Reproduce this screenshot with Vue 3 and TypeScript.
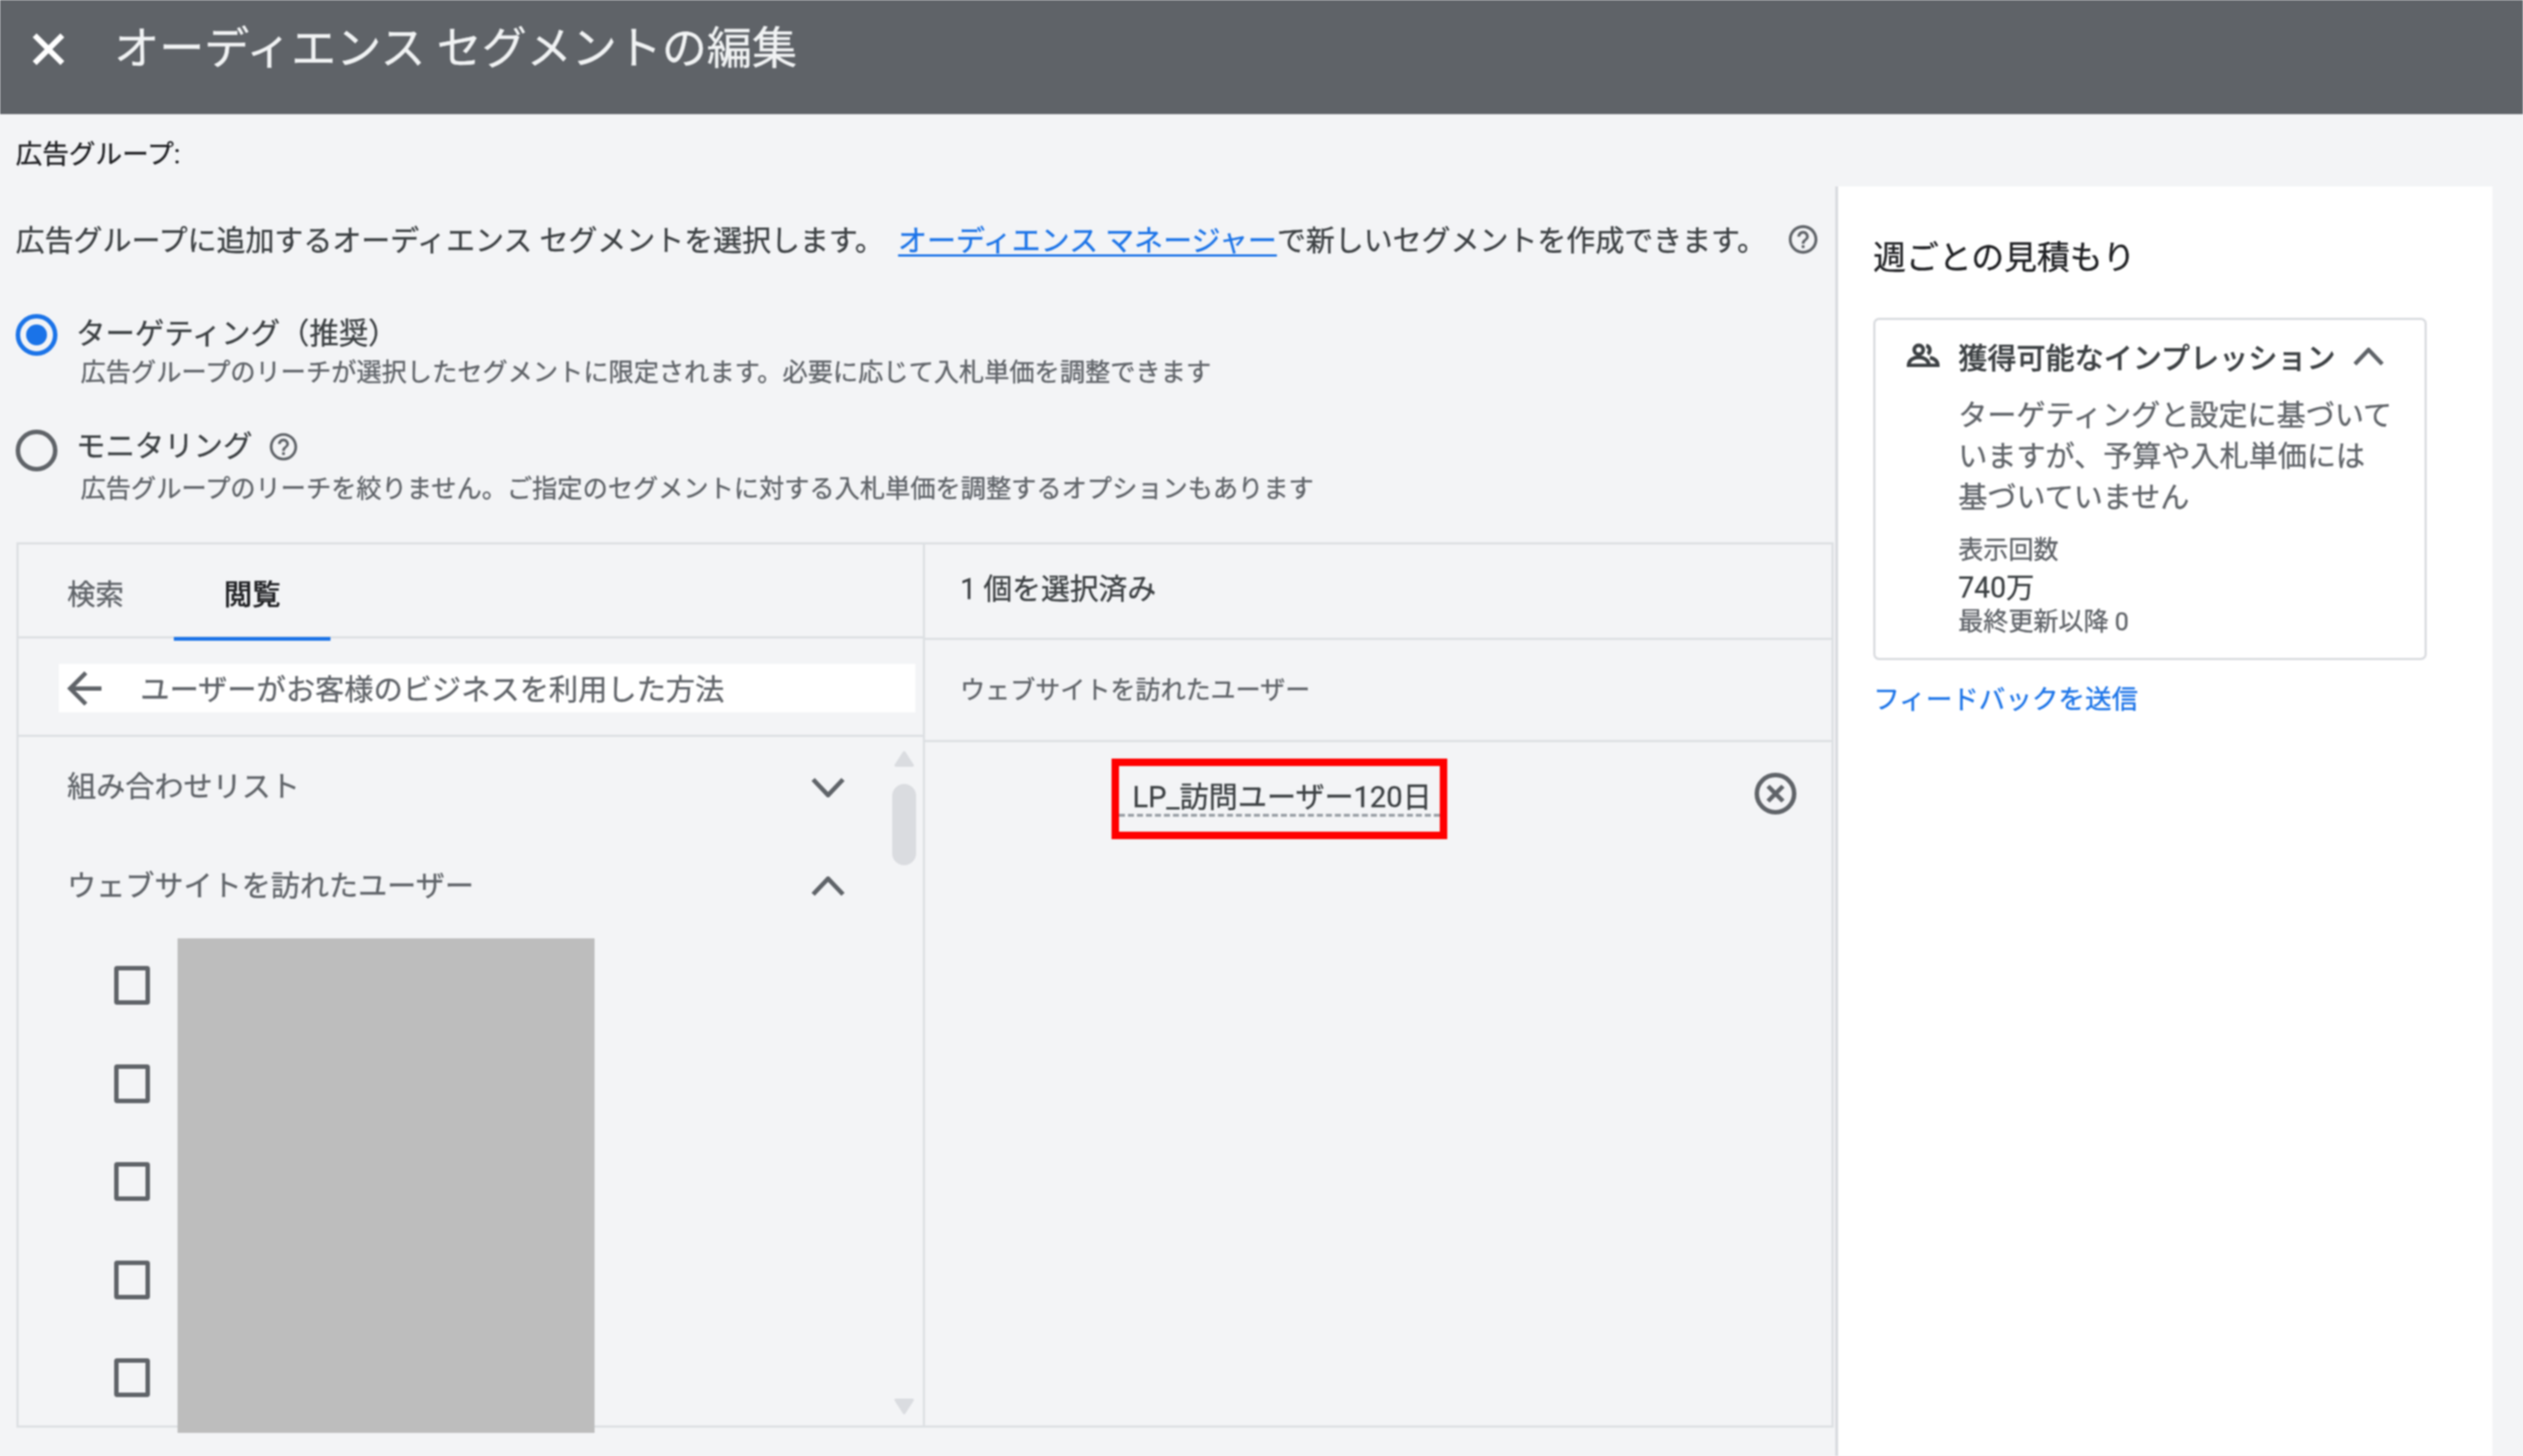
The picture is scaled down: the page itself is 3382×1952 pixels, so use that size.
<script setup lang="ts">
const checks: number[] = [1, 2, 3, 4, 5]
const help =
  'M11 18h2v-2h-2v2zm1-16C6.48 2 2 6.48 2 12s4.48 10 10 10 10-4.48 10-10S17.52 2 12 2zm0 18c-4.41 0-8-3.59-8-8s3.59-8 8-8 8 3.59 8 8-3.59 8-8 8zm0-14c-2.21 0-4 1.79-4 4h2c0-1.1.9-2 2-2s2 .9 2 2c0 2-3 1.75-3 5h2c0-2.25 3-2.5 3-5 0-2.21-1.79-4-4-4z'
</script>

<template>
  <div class="page">
    <header class="topbar">
      <svg class="close" viewBox="5 5 14 14" aria-hidden="true">
        <path d="M19 6.41L17.59 5 12 10.59 6.41 5 5 6.41 10.59 12 5 17.59 6.41 19 12 13.41 17.59 19 19 17.59 13.41 12z" />
      </svg>
      <h1 class="title">オーディエンス セグメントの編集</h1>
    </header>

    <div class="content">
      <main class="main">
        <div class="group-label">広告グループ:</div>
        <p class="intro">
          <span>広告グループに追加するオーディエンス セグメントを選択します。</span>
          <a class="intro-link">オーディエンス マネージャー</a>
          <span>で新しいセグメントを作成できます。</span>
          <svg class="help help-intro" viewBox="0 0 24 24" aria-hidden="true"><path :d="help" /></svg>
        </p>

        <div class="option option-first">
          <span class="radio radio-on"><span class="radio-dot"></span></span>
          <div class="option-text">
            <div class="option-label">ターゲティング（推奨）</div>
            <div class="option-sub">広告グループのリーチが選択したセグメントに限定されます。必要に応じて入札単価を調整できます</div>
          </div>
        </div>
        <div class="option option-second">
          <span class="radio radio-off"></span>
          <div class="option-text">
            <div class="option-label">
              <span>モニタリング</span>
              <svg class="help help-option" viewBox="0 0 24 24" aria-hidden="true"><path :d="help" /></svg>
            </div>
            <div class="option-sub option-sub-second">広告グループのリーチを絞りません。ご指定のセグメントに対する入札単価を調整するオプションもあります</div>
          </div>
        </div>

        <section class="panel">
          <div class="pane-left">
            <div class="tabs">
              <span class="tab">検索</span>
              <span class="tab tab-active">閲覧</span>
            </div>
            <div class="crumb-row">
              <div class="crumb">
                <svg class="arrow" viewBox="4 4 16 16" aria-hidden="true">
                  <path d="M20 11H7.83l5.59-5.59L12 4l-8 8 8 8 1.41-1.41L7.83 13H20v-2z" />
                </svg>
                <span class="crumb-text">ユーザーがお客様のビジネスを利用した方法</span>
              </div>
            </div>
            <div class="list">
              <div class="list-head">
                <span>組み合わせリスト</span>
                <svg class="chev" viewBox="0 0 46 27" aria-hidden="true"><path d="M3 3 L23 24 L43 3" /></svg>
              </div>
              <div class="list-head list-head-second">
                <span>ウェブサイトを訪れたユーザー</span>
                <svg class="chev" viewBox="0 0 46 27" aria-hidden="true"><path d="M3 24 L23 3 L43 24" /></svg>
              </div>
              <div class="checks">
                <span v-for="c in checks" :key="c" class="check"></span>
              </div>
            </div>
            <div class="redact"></div>
            <div class="scrollbar">
              <svg class="scroll-arrow" viewBox="0 0 32 24" aria-hidden="true"><path d="M16 3 L27 20 L5 20 Z" /></svg>
              <span class="scroll-thumb"></span>
              <svg class="scroll-arrow scroll-arrow-down" viewBox="0 0 32 24" aria-hidden="true"><path d="M5 4 L27 4 L16 21 Z" /></svg>
            </div>
          </div>

          <div class="pane-right">
            <div class="selected-head">1 個を選択済み</div>
            <div class="selected-group">ウェブサイトを訪れたユーザー</div>
            <div class="selected-row">
              <div class="selected-box"><span class="selected-name">LP_訪問ユーザー120日</span></div>
              <svg class="remove" viewBox="0 0 56 56" aria-hidden="true">
                <circle cx="28" cy="28" r="25" />
                <path d="M18 18 L38 38 M38 18 L18 38" />
              </svg>
            </div>
          </div>
        </section>
      </main>

      <aside class="aside">
        <h2 class="aside-title">週ごとの見積もり</h2>
        <div class="card">
          <div class="card-head">
            <svg class="people" viewBox="0 0 44 32" aria-hidden="true">
              <circle cx="16" cy="9" r="6" />
              <path d="M2.5 30 C2.5 22 10 19 16 19 S29.5 22 29.5 30 Z" />
              <path d="M26 3.5 A6 6 0 0 1 28 14.5" />
              <path d="M31 19.5 C37 20.5 41.5 24 41.5 30 H31" />
            </svg>
            <span class="card-title">獲得可能なインプレッション</span>
            <svg class="chev chev-card" viewBox="0 0 46 27" aria-hidden="true"><path d="M3 24 L23 3 L43 24" /></svg>
          </div>
          <div class="card-body">
            <p class="card-text">ターゲティングと設定に基づいて<br />いますが、予算や入札単価には<br />基づいていません</p>
            <div class="metric-label">表示回数</div>
            <div class="metric-value">740万</div>
            <div class="metric-note">最終更新以降 0</div>
          </div>
        </div>
        <a class="feedback">フィードバックを送信</a>
      </aside>
    </div>
  </div>
</template>

<style>
html,
body {
  margin: 0;
  background: #f3f4f6;
}
</style>

<style scoped>
.page {
  width: 3382px;
  height: 1952px;
  display: flex;
  flex-direction: column;
  overflow: hidden;
  background: #f3f4f6;
  color: #3c4043;
  font-family: Roboto, "Noto Sans CJK JP", sans-serif;
  font-size: 38.8px;
  -webkit-text-stroke: 0.4px currentColor;
  filter: blur(1px);
}
.topbar {
  height: 153px;
  flex: none;
  box-sizing: border-box;
  padding: 0 0 22px 45px;
  display: flex;
  align-items: center;
  gap: 68px;
  background: #5f6368;
  color: #f1f3f4;
}
.close {
  width: 40px;
  height: 40px;
  fill: #fff;
  stroke: #fff;
  stroke-width: 0.6px;
  overflow: visible;
}
.title {
  margin: 0;
  font-size: 60.4px;
  font-weight: 400;
  line-height: 80px;
}
.content {
  flex: 1;
  display: flex;
  min-height: 0;
}
.main {
  width: 2460px;
  flex: none;
  box-sizing: border-box;
  padding-left: 21px;
}
.group-label {
  margin-top: 34px;
  font-size: 35.7px;
  line-height: 40px;
  color: #202124;
}
.intro {
  margin: 71px 0 0;
  height: 50px;
  display: flex;
  align-items: center;
  line-height: 50px;
  white-space: pre;
}
.intro-link {
  margin-left: 19px;
  color: #1a73e8;
  text-decoration: underline;
  text-decoration-thickness: 3px;
  text-underline-offset: 5px;
}
.help {
  fill: #5f6368;
}
.help-intro {
  width: 46px;
  height: 46px;
  margin: -4px 0 0 27px;
}
.help-option {
  width: 44px;
  height: 44px;
  margin-left: 20px;
}
.option {
  display: flex;
  align-items: flex-start;
  gap: 25px;
}
.option-first {
  margin-top: 73px;
}
.option-second {
  margin-top: 50px;
}
.radio {
  flex: none;
  width: 56px;
  height: 56px;
  box-sizing: border-box;
  border-radius: 50%;
  display: flex;
  align-items: center;
  justify-content: center;
}
.radio-on {
  border: 6px solid #1a73e8;
}
.radio-dot {
  width: 28px;
  height: 28px;
  border-radius: 50%;
  background: #1a73e8;
}
.radio-off {
  margin-top: 4px;
  border: 6px solid #5f6368;
}
.option-label {
  height: 50px;
  margin-top: 2px;
  display: flex;
  align-items: center;
  font-size: 39.4px;
  line-height: 50px;
  white-space: nowrap;
}
.option-sub {
  margin: 5px 0 0 6px;
  font-size: 33.8px;
  line-height: 44px;
  color: #5f6368;
  white-space: nowrap;
}
.option-sub-second {
  margin-top: 10px;
}
.panel {
  margin: 49px 0 0 1px;
  width: 2436px;
  height: 1187px;
  box-sizing: border-box;
  border: 3px solid #dde0e3;
  display: flex;
}
.pane-left {
  position: relative;
  width: 1215px;
  flex: none;
  box-sizing: border-box;
  border-right: 3px solid #dde0e3;
}
.tabs {
  height: 126px;
  box-sizing: border-box;
  border-bottom: 3px solid #dde0e3;
  display: flex;
  padding-left: 65px;
}
.tab {
  width: 76px;
  height: 129px;
  box-sizing: border-box;
  padding-top: 42px;
  line-height: 50px;
  font-size: 38px;
  color: #5f6368;
  text-align: center;
}
.tab-active {
  width: 210px;
  margin-left: 67px;
  border-bottom: 5px solid #1a73e8;
  color: #202124;
  font-weight: 500;
}
.crumb-row {
  height: 132px;
  box-sizing: border-box;
  border-bottom: 3px solid #dde0e3;
  padding: 34px 10px 0 54px;
}
.crumb {
  height: 65px;
  background: #fff;
  display: flex;
  align-items: center;
  gap: 52px;
  padding-left: 11px;
  white-space: nowrap;
  color: #5f6368;
}
.crumb-text {
  font-size: 39.2px;
  padding-bottom: 4px;
}
.arrow {
  width: 46px;
  height: 46px;
  fill: #5f6368;
  flex: none;
}
.list {
  padding: 42px 0 0 65px;
}
.list-head {
  width: 1043px;
  height: 50px;
  display: flex;
  align-items: center;
  justify-content: space-between;
  font-size: 39px;
  line-height: 50px;
  color: #5f6368;
}
.list-head-second {
  margin-top: 83px;
}
.chev {
  width: 46px;
  height: 27px;
  flex: none;
  fill: none;
  stroke: #5f6368;
  stroke-width: 6px;
}
.checks {
  margin: 82px 0 0 63px;
  display: flex;
  flex-direction: column;
  gap: 79.5px;
}
.check {
  width: 48px;
  height: 52px;
  box-sizing: border-box;
  border: 6px solid #5f6368;
  border-radius: 4px;
}
.redact {
  position: absolute;
  left: 213px;
  top: 528px;
  width: 559px;
  height: 663px;
  background: #bdbdbd;
}
.scrollbar {
  position: absolute;
  left: 1171px;
  top: 276px;
  bottom: 14px;
  width: 32px;
  display: flex;
  flex-direction: column;
  align-items: center;
}
.scroll-arrow {
  width: 32px;
  height: 24px;
  fill: #dadce0;
  stroke: #dadce0;
  stroke-width: 4px;
  stroke-linejoin: round;
}
.scroll-arrow-down {
  margin-top: auto;
}
.scroll-thumb {
  margin-top: 21px;
  width: 32px;
  height: 109px;
  border-radius: 16px;
  background: #dadce0;
}
.pane-right {
  flex: 1;
  min-width: 0;
}
.selected-head {
  height: 128px;
  box-sizing: border-box;
  border-bottom: 3px solid #dde0e3;
  padding: 35px 0 0 47px;
  line-height: 50px;
  font-size: 38.6px;
  white-space: pre;
}
.selected-group {
  height: 137px;
  box-sizing: border-box;
  border-bottom: 3px solid #dde0e3;
  padding: 46px 0 0 47px;
  font-size: 33.6px;
  line-height: 44px;
  color: #5f6368;
}
.selected-row {
  display: flex;
  align-items: flex-start;
  padding: 22px 47px 0 250px;
}
.selected-box {
  width: 450px;
  height: 108px;
  box-sizing: border-box;
  border: 10px solid #f00;
  padding-top: 20px;
  flex: none;
}
.selected-name {
  display: block;
  height: 48px;
  box-sizing: border-box;
  padding-left: 18px;
  border-bottom: 4px dashed #9aa0a6;
  line-height: 44px;
  font-size: 39px;
  white-space: nowrap;
  color: #3c4043;
}
.remove {
  width: 56px;
  height: 56px;
  margin: 19px 0 0 auto;
  fill: none;
  stroke: #5f6368;
  stroke-width: 6px;
}
.aside {
  width: 881px;
  flex: none;
  box-sizing: border-box;
  margin-top: 97px;
  padding: 66px 0 0 47px;
  border-left: 4px solid #dadce0;
  background: #fff;
}
.aside-title {
  margin: 0;
  height: 60px;
  font-size: 44px;
  font-weight: 400;
  line-height: 60px;
  color: #202124;
}
.card {
  margin-top: 50px;
  width: 742px;
  height: 459px;
  box-sizing: border-box;
  border: 3px solid #dadce0;
  border-radius: 8px;
  padding-top: 27px;
}
.card-head {
  height: 50px;
  padding-left: 42px;
  display: flex;
  align-items: center;
}
.people {
  width: 44px;
  height: 32px;
  flex: none;
  fill: none;
  stroke: #3c4043;
  stroke-width: 5px;
  margin: -10px 25px 0 0;
}
.card-title {
  font-size: 39px;
  font-weight: 500;
  line-height: 50px;
  white-space: nowrap;
}
.chev-card {
  width: 42px;
  height: 25px;
  margin: -6px 0 0 23px;
}
.card-body {
  padding-left: 111px;
}
.card-text {
  margin: 24px 0 0;
  line-height: 55px;
  font-size: 39px;
  white-space: nowrap;
  color: #5f6368;
}
.metric-label {
  margin-top: 22px;
  font-size: 33.6px;
  line-height: 42px;
  color: #5f6368;
}
.metric-value {
  margin-top: 6px;
  font-size: 38px;
  line-height: 46px;
}
.metric-note {
  margin-top: 3px;
  font-size: 33.6px;
  line-height: 40px;
  color: #5f6368;
}
.feedback {
  display: block;
  margin-top: 28px;
  font-size: 35.6px;
  line-height: 50px;
  color: #1a73e8;
}
</style>
